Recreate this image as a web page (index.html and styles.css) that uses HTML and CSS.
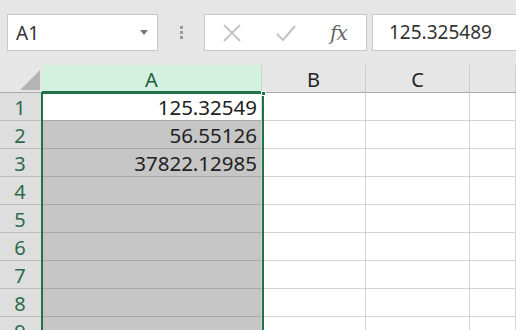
FILE: index.html
```html
<!DOCTYPE html>
<html lang="en">
  <head>
    <meta charset="UTF-8" />
    <meta name="viewport" content="width=device-width, initial-scale=1.0" />
    <title>Sheet</title>
    <link rel="stylesheet" href="styles.css">
  </head>
  <body>
    <div class="toolbar">
      <div class="name-box">
        <span>A1</span>
        <svg class="caret" width="8" height="5" viewBox="0 0 8 5"><path d="M0 0h8L4 5z" fill="#777"/></svg>
      </div>
      <div class="grip">
        <span></span><span></span><span></span>
      </div>
      <div class="fx-buttons">
        <svg class="btn" width="20" height="20" viewBox="0 0 20 20">
          <path d="M2 2L18 18M18 2L2 18" stroke="#c4c4c4" stroke-width="2" fill="none"/>
        </svg>
        <svg class="btn" width="22" height="20" viewBox="0 0 22 20">
          <path d="M2 11L8 17L20 3" stroke="#c4c4c4" stroke-width="2.2" fill="none"/>
        </svg>
        <span class="fx">fx</span>
      </div>
      <div class="formula">125.325489</div>
    </div>

    <div class="sheet">
      <div class="corner"><span class="tri"></span></div>
      <div class="col-head active">A</div>
      <div class="col-head">B</div>
      <div class="col-head">C</div>
      <div class="col-head"></div>

      <div class="row-head">1</div>
      <div class="cell sel first">125.32549</div>
      <div class="cell"></div><div class="cell"></div><div class="cell"></div>

      <div class="row-head">2</div>
      <div class="cell sel">56.55126</div>
      <div class="cell"></div><div class="cell"></div><div class="cell"></div>

      <div class="row-head">3</div>
      <div class="cell sel">37822.12985</div>
      <div class="cell"></div><div class="cell"></div><div class="cell"></div>

      <div class="row-head">4</div>
      <div class="cell sel"></div>
      <div class="cell"></div><div class="cell"></div><div class="cell"></div>

      <div class="row-head">5</div>
      <div class="cell sel"></div>
      <div class="cell"></div><div class="cell"></div><div class="cell"></div>

      <div class="row-head">6</div>
      <div class="cell sel"></div>
      <div class="cell"></div><div class="cell"></div><div class="cell"></div>

      <div class="row-head">7</div>
      <div class="cell sel"></div>
      <div class="cell"></div><div class="cell"></div><div class="cell"></div>

      <div class="row-head">8</div>
      <div class="cell sel"></div>
      <div class="cell"></div><div class="cell"></div><div class="cell"></div>

      <div class="row-head">9</div>
      <div class="cell sel"></div>
      <div class="cell"></div><div class="cell"></div><div class="cell"></div>

      <div class="selection"><span class="handle"></span></div>
    </div>
  </body>
</html>
```

FILE: styles.css
```css
:root {
  --bar: #e6e6e6;
  --green: #217346;
  --grid: #d4d4d4;
  --picked: #c6c6c6;
}

* {
  margin: 0;
  padding: 0;
  box-sizing: border-box;
}

body {
  font-family: "Noto Sans", sans-serif;
  background-color: var(--bar);
  width: 516px;
  height: 330px;
  overflow: hidden;
  color: #333;
}

/* top formula bar */
.toolbar {
  display: flex;
  align-items: center;
  height: 65px;
  padding: 0 0 0 7px;
}

.name-box {
  width: 151px;
  height: 37px;
  background: #fff;
  border: 1px solid #c8c8c8;
  display: flex;
  align-items: center;
  justify-content: space-between;
  padding: 0 9px 0 8px;
  font-size: 19px;
  color: #333;
}

.grip {
  width: 46px;
  display: flex;
  flex-direction: column;
  align-items: center;
  gap: 2px;
}

.grip span {
  width: 3px;
  height: 3px;
  background: #9a9a9a;
}

.fx-buttons {
  width: 163px;
  height: 37px;
  background: #fff;
  border: 1px solid #c8c8c8;
  display: flex;
  align-items: center;
  padding: 0 0 0 17px;
}

.fx-buttons .btn {
  margin-right: 33px;
}

.fx-buttons .btn + .btn {
  margin-right: 33px;
}

.fx {
  font-family: "DejaVu Serif", serif;
  font-style: italic;
  font-size: 20px;
  color: #666;
  letter-spacing: -1px;
}

.formula {
  flex: 1;
  height: 37px;
  margin-left: 5px;
  background: #fff;
  border: 1px solid #c8c8c8;
  border-right: none;
  padding-left: 16px;
  font-size: 19px;
  line-height: 34px;
  color: #333;
}

/* the grid */
.sheet {
  position: relative;
  display: grid;
  grid-template-columns: 42px 220px 104px 104px 1fr;
  grid-auto-rows: 28px;
  overflow: hidden;
  height: 265px;
}

.corner {
  position: relative;
  background: var(--bar);
  border-bottom: 1px solid #ababab;
}

.tri {
  position: absolute;
  right: 2px;
  bottom: 2px;
  width: 0;
  height: 0;
  border-left: 20px solid transparent;
  border-bottom: 20px solid #b4b4b4;
}

.col-head {
  background: var(--bar);
  border-right: 1px solid #cdcdcd;
  border-bottom: 1px solid #ababab;
  text-align: center;
  font-size: 20px;
  line-height: 30px;
  color: #222;
}

.col-head.active {
  background: #d3f0e0;
  color: #1e5c3a;
  border-bottom: 2px solid var(--green);
  border-right-color: #b9dcc8;
}

.row-head {
  background: #dedede;
  border-bottom: 1px solid #bcbcbc;
  text-align: center;
  font-size: 20px;
  line-height: 29px;
  color: #2f6a4c;
  padding-right: 2px;
}

.cell {
  background: #fff;
  border-right: 1px solid var(--grid);
  border-bottom: 1px solid var(--grid);
  text-align: right;
  font-size: 20.5px;
  line-height: 28px;
  padding-right: 4px;
  color: #222;
}

.cell.sel {
  background: var(--picked);
  border-bottom-color: #a8a8a8;
}

.cell.first {
  background: #fff;
}

.selection {
  position: absolute;
  left: 41px;
  top: 27px;
  width: 223px;
  height: 300px;
  border: 2px solid var(--green);
  pointer-events: none;
}

.handle {
  position: absolute;
  right: -4px;
  top: -3px;
  width: 5px;
  height: 5px;
  background: var(--green);
  border: 1px solid #fff;
}
```
